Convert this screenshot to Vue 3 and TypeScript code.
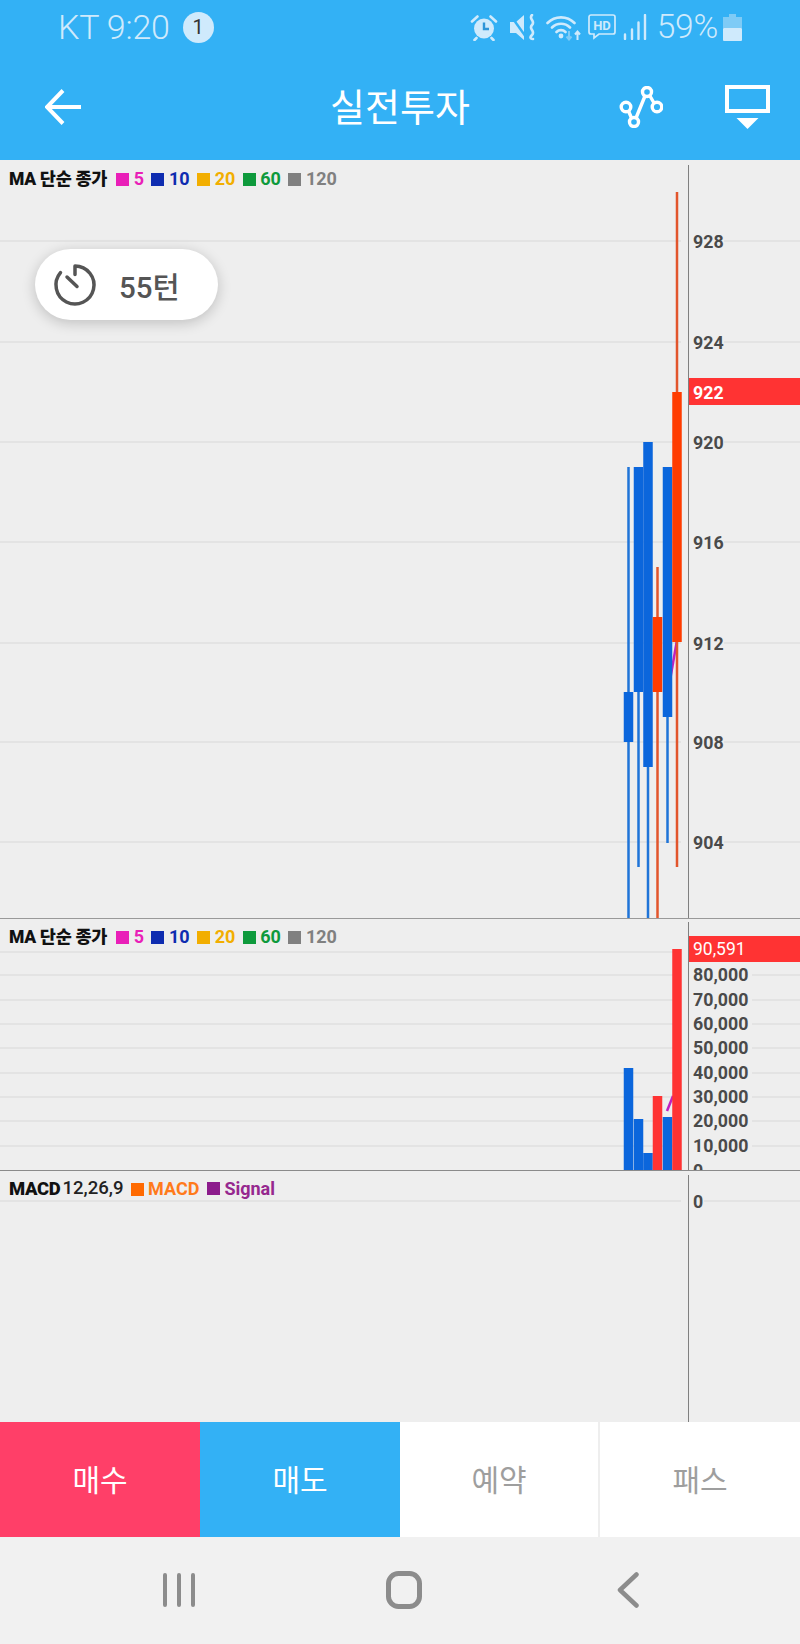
<script setup lang="ts">
interface Candle { cx: number; bodyTop: number; bodyBottom: number; wickTop: number; wickBottom: number; up: boolean; volTop: number }
const candles: Candle[] = [
  { cx: 628.5, bodyTop: 692, bodyBottom: 742, wickTop: 467, wickBottom: 918, up: false, volTop: 1068 },
  { cx: 638.5, bodyTop: 467, bodyBottom: 692, wickTop: 467, wickBottom: 867, up: false, volTop: 1119 },
  { cx: 648, bodyTop: 442, bodyBottom: 767, wickTop: 442, wickBottom: 918, up: false, volTop: 1153 },
  { cx: 657.5, bodyTop: 617, bodyBottom: 692, wickTop: 567, wickBottom: 918, up: true, volTop: 1096 },
  { cx: 667.5, bodyTop: 467, bodyBottom: 717, wickTop: 467, wickBottom: 843, up: false, volTop: 1117 },
  { cx: 677, bodyTop: 392, bodyBottom: 642, wickTop: 192, wickBottom: 867, up: true, volTop: 949 },
]
const prices = [
  { y: 241, t: '928' }, { y: 342, t: '924' }, { y: 442, t: '920' }, { y: 542, t: '916' },
  { y: 643, t: '912' }, { y: 742, t: '908' }, { y: 842, t: '904' },
]
const volumes = [
  { y: 975, t: '80,000' }, { y: 1000, t: '70,000' }, { y: 1024, t: '60,000' }, { y: 1048, t: '50,000' },
  { y: 1073, t: '40,000' }, { y: 1097, t: '30,000' }, { y: 1121, t: '20,000' }, { y: 1146, t: '10,000' },
  { y: 1171, t: '0' },
]
const maLegend = [
  { c: '#e91fb8', t: '5' }, { c: '#0e2cb0', t: '10' }, { c: '#f2ae00', t: '20' },
  { c: '#0e9a3c', t: '60' }, { c: '#808080', t: '120' },
]
const actions = [
  { t: '매수', cls: 'buy' }, { t: '매도', cls: 'sell' }, { t: '예약', cls: 'plain split' }, { t: '패스', cls: 'plain' },
]
</script>

<template>
  <div class="page">
    <header class="head">
      <div class="status">
        <div class="status-left">
          <span class="status-text">KT 9:20</span>
          <span class="badge">1</span>
        </div>
        <div class="status-right">
          <svg class="s-alarm" width="28" height="27" viewBox="0 0 28 27">
            <circle cx="14" cy="14.5" r="10" fill="#cfeafc" />
            <path d="M14 8.5v6.5h5" fill="none" stroke="#2f95d8" stroke-width="2.4" />
            <path d="M2 7.5 7.5 2.5M26 7.5 20.5 2.5M6.5 24 4.5 26M21.5 24l2 2" stroke="#cfeafc" stroke-width="2.6" stroke-linecap="round" fill="none" />
          </svg>
          <svg class="s-mute" width="28" height="27" viewBox="0 0 28 27">
            <path d="M1 8h6l8-7v25l-8-7H1z" fill="#cfeafc" />
            <path d="M2 2 17 23" stroke="#33b1f5" stroke-width="2.4" />
            <path d="M23 1c-4 4 4 6 0 10s4 6 0 10 1 4 1 4" fill="none" stroke="#cfeafc" stroke-width="2.6" stroke-linecap="round" />
          </svg>
          <svg class="s-wifi" width="36" height="27" viewBox="0 0 36 27">
            <path d="M1.5 9C9 1.5 21 1.5 28.5 9M6 13.5c5-5 13-5 18 0M10.5 18c2.5-2.5 6.5-2.5 9 0" fill="none" stroke="#cfeafc" stroke-width="2.6" stroke-linecap="round" />
            <circle cx="15" cy="22" r="2.4" fill="#cfeafc" />
            <path d="M23 17v8M20.5 22.500 23 25.500l2.500-3" fill="none" stroke="#7ecbf6" stroke-width="2" />
            <path d="M31.500 26v-8M29 20.500l2.500-3 2.500 3" fill="none" stroke="#cfeafc" stroke-width="2" />
          </svg>
          <svg class="s-hd" width="28" height="26" viewBox="0 0 28 26">
            <path d="M3 1h22a2 2 0 0 1 2 2v15a2 2 0 0 1-2 2H11l-5 4v-4H3a2 2 0 0 1-2-2V3a2 2 0 0 1 2-2z" fill="none" stroke="#cfeafc" stroke-width="1.7" />
            <text x="14" y="15.500" class="hd">HD</text>
          </svg>
          <svg class="s-signal" width="24" height="26" viewBox="0 0 24 26">
            <path d="M2 20.500v4.500M9 15.500v9.500M15.500 8.500v16.500M22 1v24" stroke="#cfeafc" stroke-width="2.4" stroke-linecap="round" fill="none" />
          </svg>
          <span class="status-text pct">59%</span>
          <svg class="s-batt" width="19" height="27" viewBox="0 0 19 27">
            <path d="M6 0h7v3h6v11H0V3h6z" fill="#7ecbf6" />
            <rect y="14" width="19" height="13" rx="1" fill="#cfeafc" />
          </svg>
        </div>
      </div>
      <div class="toolbar">
        <svg class="back" width="36" height="36" viewBox="0 0 36 36">
          <path d="M18 1.500 2 18l16 16.500M2 18h34" fill="none" stroke="#fff" stroke-width="4" />
        </svg>
        <h1 class="title">실전투자</h1>
        <div class="tools">
          <svg width="44" height="42" viewBox="0 0 44 42">
            <g fill="none" stroke="#fff" stroke-width="3.4">
              <circle cx="28" cy="6" r="4.500" />
              <circle cx="7" cy="21" r="4.800" />
              <circle cx="38" cy="21" r="4.800" />
              <circle cx="15" cy="36" r="4.500" />
              <path d="M17 32 26 10M31 10l4 7M9.500 25l3 7" />
            </g>
          </svg>
          <svg width="45" height="44" viewBox="0 0 45 44">
            <rect x="2" y="2" width="41" height="24" fill="none" stroke="#fff" stroke-width="4" />
            <path d="M11.500 33h22l-11 11z" fill="#fff" />
          </svg>
        </div>
      </div>
    </header>

    <section class="panel panel-price">
      <svg class="plot" width="800" height="758" viewBox="0 160 800 758">
        <g v-for="p in prices" :key="p.t">
          <path :d="`M0 ${p.y}H681M724 ${p.y}H800`" class="grid" />
          <text x="693" :y="p.y + 6.5" class="axis-label">{{ p.t }}</text>
        </g>
        <line x1="688.5" x2="688.5" y1="165" y2="918" class="axis" />
        <rect x="689" y="378" width="111" height="27" fill="#ff3333" />
        <text x="693" y="399" class="axis-label on-red">922</text>
        <path d="M668 692 677 640" class="ma-line" />
        <g v-for="c in candles" :key="c.cx">
          <rect :x="c.cx - 1.25" :y="c.wickTop" width="2.5" :height="c.wickBottom - c.wickTop" :fill="c.up ? '#e2552c' : '#1f74d8'" />
          <rect :x="c.cx - 4.75" :y="c.bodyTop" width="9.5" :height="c.bodyBottom - c.bodyTop" :fill="c.up ? '#ff3c00' : '#0b66dc'" />
        </g>
      </svg>
      <div class="legend">
        <b class="l-name">MA 단순 종가</b>
        <span v-for="m in maLegend" :key="m.t" class="l-item" :style="{ color: m.c }"><i class="sq" :style="{ background: m.c }"></i>{{ m.t }}</span>
      </div>
      <div class="pill">
        <svg width="48" height="48" viewBox="0 0 48 48">
          <path d="M24 5A19 19 0 1 1 9.500 11.700M24 5v8.500M16 16l10 9.500" fill="none" stroke="#555" stroke-width="3.5" stroke-linecap="round" />
        </svg>
        <span class="pill-text">55턴</span>
      </div>
    </section>

    <section class="panel panel-volume">
      <svg class="plot" width="800" height="251" viewBox="0 919 800 251">
        <path d="M0 952H681" class="grid" />
        <g v-for="v in volumes" :key="v.t">
          <path :d="`M0 ${v.y}H681M752 ${v.y}H800`" class="grid" />
          <text x="693" :y="v.y + 6" class="axis-label">{{ v.t }}</text>
        </g>
        <line x1="688.5" x2="688.5" y1="922" y2="1170" class="axis" />
        <rect x="689" y="936" width="111" height="26" fill="#ff3333" />
        <text x="693" y="955" class="vol-now">90,591</text>
        <path d="M667 1111 673 1096" class="ma-line" />
        <rect v-for="c in candles" :key="c.cx" :x="c.cx - 4.75" :y="c.volTop" width="9.5" :height="1170 - c.volTop" :fill="c.up ? '#ff3333' : '#0b66dc'" />
      </svg>
      <div class="legend">
        <b class="l-name">MA 단순 종가</b>
        <span v-for="m in maLegend" :key="m.t" class="l-item" :style="{ color: m.c }"><i class="sq" :style="{ background: m.c }"></i>{{ m.t }}</span>
      </div>
    </section>

    <section class="panel panel-macd">
      <svg class="plot" width="800" height="251" viewBox="0 1171 800 251">
        <path d="M0 1201H681M704 1201H800" class="grid" />
        <line x1="688.5" x2="688.5" y1="1175" y2="1422" class="axis" />
        <text x="693" y="1208" class="axis-label">0</text>
      </svg>
      <div class="legend legend-macd">
        <b class="l-name">MACD</b>
        <span class="l-params">12,26,9</span>
        <span class="l-item l-macd"><i class="sq"></i>MACD</span>
        <span class="l-item l-signal"><i class="sq"></i>Signal</span>
      </div>
    </section>

    <div class="actions">
      <button v-for="a in actions" :key="a.t" class="action" :class="a.cls">{{ a.t }}</button>
    </div>

    <nav class="nav">
      <svg width="34" height="36" viewBox="0 0 34 36">
        <path d="M3 3v30M17 3v30M31 3v30" stroke="#8c8c8c" stroke-width="4" stroke-linecap="round" fill="none" />
      </svg>
      <svg width="36" height="38" viewBox="0 0 36 38">
        <rect x="2.5" y="2.5" width="31" height="33" rx="10" fill="none" stroke="#8c8c8c" stroke-width="5" />
      </svg>
      <svg width="22" height="36" viewBox="0 0 22 36">
        <path d="M19.5 2.5 3 18l16.5 15.5" fill="none" stroke="#8c8c8c" stroke-width="4.5" stroke-linecap="round" stroke-linejoin="round" />
      </svg>
    </nav>
  </div>
</template>

<style>
html, body { margin: 0; background: #eeeeee; }
</style>

<style scoped>
.page {
  width: 800px;
  height: 1644px;
  display: flex;
  flex-direction: column;
  overflow: hidden;
  font-family: Roboto, "Noto Sans CJK KR", sans-serif;
  background: #eeeeee;
}
.head { background: #33b1f5; height: 160px; flex: none; }
.status { height: 54px; display: flex; align-items: center; justify-content: space-between; padding: 0 58px; box-sizing: border-box; }
.status-left { display: flex; align-items: center; gap: 13px; }
.status-text { font-size: 34px; font-weight: 300; color: #cfeafc; line-height: 54px; letter-spacing: -0.2px; }
.badge {
  width: 31px; height: 31px; border-radius: 50%; background: #cfeafc; color: #333;
  font-size: 20px; display: flex; align-items: center; justify-content: center;
}
.status-right { display: flex; align-items: center; }
.s-mute { margin-left: 11px; }
.s-wifi { margin-left: 9px; }
.s-hd { margin-left: 6px; }
.s-signal { margin-left: 7px; }
.pct { margin-left: 10px; font-size: 33.5px; }
.s-batt { margin-left: 5px; }
.hd { font-size: 13px; font-weight: 700; fill: #cfeafc; text-anchor: middle; font-family: Roboto, sans-serif; }
.toolbar { height: 106px; display: grid; grid-template-columns: 1fr auto 1fr; align-items: center; padding: 0 30px 0 45px; box-sizing: border-box; }
.back { display: block; }
.title { margin: 0 0 0 -15px; padding-bottom: 4px; font-size: 38px; font-weight: 400; color: #fff; line-height: 1; font-family: "Noto Sans CJK KR", sans-serif; }
.tools { display: flex; justify-content: flex-end; align-items: center; gap: 62px; }

.panel { position: relative; flex: none; overflow: hidden; box-sizing: border-box; background: #eeeeee; }
.panel-price { height: 759px; border-bottom: 1px solid #999; }
.panel-volume { height: 252px; border-bottom: 1px solid #8a8a8a; }
.panel-macd { height: 251px; }
.plot { display: block; }
.grid { stroke: #e3e3e3; stroke-width: 2; fill: none; }
.axis { stroke: #808080; stroke-width: 1; }
.axis-label { font-size: 17.8px; font-weight: 700; fill: #4a4a4a; font-family: Roboto, sans-serif; }
.on-red { fill: #fff; }
.vol-now { font-size: 17.5px; font-weight: 400; fill: #fff; font-family: Roboto, sans-serif; }
.ma-line { stroke: #c020c0; stroke-width: 2.5; fill: none; }

.legend {
  position: absolute; left: 9px; top: 8px; height: 22px;
  display: flex; align-items: center; font-size: 18px; font-weight: 700; line-height: 22px; white-space: nowrap;
}
.panel-volume .legend { top: 7px; }
.legend-macd { top: 7px; }
.l-name { color: #111; font-size: 17.5px; margin-right: 9px; letter-spacing: -0.3px; }
.legend-macd .l-name { font-size: 18.4px; margin-right: 2px; }
.l-item { display: inline-flex; align-items: center; margin-right: 7.5px; }
.sq { width: 13px; height: 13px; margin-right: 4.5px; display: block; }
.l-params { color: #222; font-weight: 500; margin: -3px 7px 0 0; font-size: 18.6px; }
.l-macd { color: #ff7a1a; }
.l-macd .sq { background: #ff6a00; }
.l-signal { color: #96288f; margin-top: -1px; }
.l-signal .sq { background: #8c1c8c; }

.pill {
  position: absolute; left: 35px; top: 89px; width: 183px; height: 71px; border-radius: 36px;
  background: #fff; box-shadow: 0 3px 14px rgba(0, 0, 0, 0.2);
  display: flex; align-items: center; padding-left: 16px; box-sizing: border-box; gap: 20px;
}
.pill-text { font-size: 29.5px; font-weight: 500; color: #555; }

.actions { height: 115px; flex: none; display: grid; grid-template-columns: repeat(4, 200px); background: #fff; }
.action {
  border: 0; margin: 0; padding: 0 0 4px; font-size: 30px; font-weight: 400;
  font-family: "Noto Sans CJK KR", sans-serif; color: #fff; background: #fff;
}
.buy { background: #ff3f68; }
.sell { background: #33b1f5; }
.plain { color: #9e9e9e; }
.split { border-right: 2px solid #eeeeee; }

.nav {
  flex: 1; background: #f1f1f1; display: grid; grid-template-columns: repeat(3, 224.5px); padding-left: 67px;
  justify-items: center; align-items: center;
}
.nav svg { margin-bottom: 2px; }
</style>
